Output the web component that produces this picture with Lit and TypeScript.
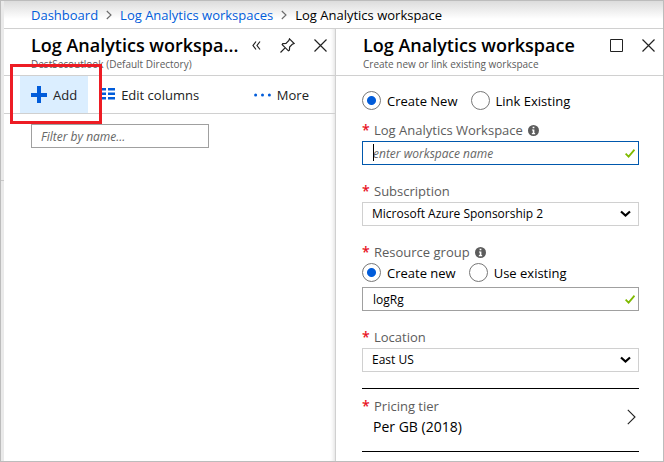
import { LitElement, html, css, svg } from "lit";
import { customElement, property, state } from "lit/decorators.js";
import { classMap } from "lit/directives/class-map.js";

const shared = css`
  *, *::before, *::after { box-sizing: border-box; }
  button, input, select {
    font: inherit;
    color: inherit;
    margin: 0;
    border-radius: 0;
  }
  button {
    display: flex;
    align-items: center;
    padding: 0;
    border: 0;
    background: none;
    text-align: left;
  }
  svg { display: block; flex: none; }
`;

const icons = {
  crumb: svg`<svg width="6" height="10" viewBox="0 0 6 10" fill="none" stroke="#6a6a6a" stroke-width="1.1"><path d="M.8 1l4.200 4-4.200 4"/></svg>`,
  collapse: svg`<svg width="9" height="9" viewBox="0 0 9 9" fill="none" stroke="#222" stroke-width="1.2"><path d="M4 .5L1 4.500l3 4M8 .5L5 4.500l3 4"/></svg>`,
  pin: svg`<svg width="15" height="15" viewBox="0 0 15 15" fill="none" stroke="#222" stroke-width="1.200"><path d="M9.500.8l4.700 4.700-1.700.6-2.900 2.900-.2 3.200-1 .6-6.200-6.200.6-1 3.200-.2 2.900-2.900zM5.300 9.700L.5 14.500"/></svg>`,
  close: svg`<svg width="13" height="13" viewBox="0 0 13 13" fill="none" stroke="#222" stroke-width="1.2"><path d="M.5.5l12 12M12.500.5l-12 12"/></svg>`,
  square: svg`<svg width="13" height="13" viewBox="0 0 13 13" fill="none" stroke="#222"><path d="M.5.5h12v12H.5z"/></svg>`,
  plus: svg`<svg width="16" height="17" viewBox="0 0 16 17" fill="#015cda"><path d="M6 0h4v7h6v4h-6v6H6v-6H0V7h6z"/></svg>`,
  columns: svg`<svg width="16" height="13" viewBox="0 0 16 13" fill="#015cda"><path d="M0 0h7v2.500H0zM0 4.500h7V7H0zM0 9h7v2.500H0zM9 0h7v2.500H9zM9 4.500h7V7H9zM9 9h7v2.500H9z"/></svg>`,
  dots: svg`<svg width="17" height="4" viewBox="0 0 17 4" fill="#015cda"><circle cx="1.600" cy="2" r="1.500"/><circle cx="8.500" cy="2" r="1.500"/><circle cx="15.400" cy="2" r="1.500"/></svg>`,
  info: svg`<svg width="11" height="11" viewBox="0 0 10 10"><circle cx="5" cy="5" r="5" fill="#5c5c5c"/><path d="M4.200 1.500h1.600v1.500H4.200zM3.600 4h2.200v3.300h.7v1h-3v-1h.8V5h-.7z" fill="#fff"/></svg>`,
  check: svg`<svg width="10" height="9" viewBox="0 0 10 9" fill="none" stroke="#7fba00" stroke-width="1.800"><path d="M.6 4.600l3 3L9.500.7"/></svg>`,
  chevron: svg`<svg width="11" height="8" viewBox="0 0 11 8" fill="none" stroke="#000" stroke-width="2.200"><path d="M1 1.500l4.500 4 4.500-4"/></svg>`,
  next: svg`<svg width="9" height="16" viewBox="0 0 9 16" fill="none" stroke="#222" stroke-width="1.100"><path d="M.8.8L8 8 .8 15.200"/></svg>`,
};

@customElement("blade-header")
class BladeHeader extends LitElement {
  @property() heading = "";
  @property() subtitle = "";
  static styles = [shared, css`
    :host {
      display: grid;
      grid-template-columns: minmax(0, 1fr) auto;
      align-content: start;
      height: 47px;
      padding: 4px 10px 0 27px;
      border-bottom: 1px solid #d0d0d0;
    }
    h2 {
      margin: 0;
      font-size: 18px;
      line-height: 24px;
      font-weight: 600;
      color: #000;
      white-space: nowrap;
    }
    p {
      grid-column: 1 / -1;
      margin: 0;
      font-size: 10px;
      line-height: 14px;
      color: #5c5c5c;
    }
  `];
  render() {
    return html`<h2>${this.heading}</h2><slot></slot><p>${this.subtitle}</p>`;
  }
}

@customElement("radio-pair")
class RadioPair extends LitElement {
  @property({ type: Array }) options: string[] = [];
  @property() name = "";
  @state() private picked = 0;
  static styles = [shared, css`
    :host { display: flex; gap: 13px; color: #000; }
    label { display: flex; align-items: center; gap: 6px; line-height: 18px; }
    input {
      appearance: none;
      width: 19px;
      height: 19px;
      border: 1px solid #777;
      border-radius: 50%;
      background: #fff;
    }
    input:checked { background: radial-gradient(circle, #015cda 4px, #fff 5px); }
  `];
  render() {
    return this.options.map((o, i) => html`<label>
      <input type="radio" name=${this.name} .checked=${i === this.picked} @change=${() => (this.picked = i)}>${o}
    </label>`);
  }
}

@customElement("app-root")
class AppRoot extends LitElement {
  static styles = [shared, css`
    :host {
      display: grid;
      grid-template-rows: auto 1fr;
      box-sizing: border-box;
      min-height: 100vh;
      padding-left: 3px;
      border: 1px solid #bcbcbc;
      background:
        linear-gradient(#c8c8c8, #c8c8c8) 0 179px / 3px 1px no-repeat,
        linear-gradient(90deg, #eaeaea 3px, #fff 3px);
      font: 13px/18px "Open Sans", "Noto Sans", sans-serif;
      color: #222;
    }
    .crumbs {
      display: flex;
      align-items: center;
      height: 28px;
      padding-left: 27px;
      border-bottom: 1px solid #d0d0d0;
      background: linear-gradient(#dcdcdc, #fff 18px);
      white-space: nowrap;
      color: #000;
    }
    .crumbs a { color: #015cda; text-decoration: none; }
    .crumbs svg { margin: 0 8px; }
    .blades { display: grid; grid-template-columns: 332fr 327fr; }
    .list { border-right: 1px solid #d0d0d0; box-shadow: inset -4px 0 4px -3px #ddd; }
    .tools { display: flex; align-items: center; height: 24px; }
    .tools { gap: 19px; margin-right: -2px; }
    .bar {
      display: flex;
      height: 38px;
      padding: 0 26px 0 16px;
      border-bottom: 1px solid #d0d0d0;
    }
    .bar button { gap: 6px; padding: 0 11px; }
    .bar .add { background: #dbeeff; }
    .bar .more { margin-left: auto; padding: 0; }
    .find { padding: 10px 27px; }
    .text {
      width: 100%;
      height: 24px;
      padding: 0 30px 0 10px;
      border: 1px solid #a0a0a0;
      background: #fff;
      font-size: 12px;
      color: #000;
      outline: none;
    }
    .text::placeholder { color: #666; font-style: italic; opacity: 1; }
    .find .text { display: block; width: 178px; padding: 0 9px; }
    .form { padding: 15px 24px 0 26px; }
    .field { margin-top: 16px; }
    .first { margin-top: 10px; }
    .label { display: flex; align-items: center; gap: 5px; height: 20px; color: #5c5c5c; }
    .field .label { margin-bottom: 1px; }
    .star { width: 7px; font-size: 14px; font-weight: 600; color: #e81123; }
    .box { position: relative; display: flex; }
    .box svg { position: absolute; right: 4px; top: 8px; pointer-events: none; }
    .box.pick svg { right: 8px; }
    .box.active .text { border-color: #0058ad; }
    .box.active::after {
      content: "";
      position: absolute;
      left: 11px;
      top: 3px;
      width: 1px;
      height: 17px;
      background: #000;
    }
    .pick select {
      appearance: none;
      width: 100%;
      height: 24px;
      padding: 0 24px 0 9px;
      border: 1px solid #d0d0d0;
      background: #fff;
      font-size: 12px;
      color: #000;
    }
    .group { margin-bottom: 5px; }
    .tier {
      width: 100%;
      height: 64px;
      margin-top: 16px;
      padding: 0 3px 6px 0;
      justify-content: space-between;
      border: solid #000;
      border-width: 1px 0;
    }
    .value { display: block; padding-left: 11px; font-size: 14px; line-height: 22px; color: #000; }
    .callout {
      position: absolute;
      left: 10px;
      top: 64px;
      width: 92px;
      height: 60px;
      border: 3px solid #ed1c24;
      pointer-events: none;
    }
  `];

  private label(text: string, id: string, info = false) {
    return html`<label class="label" for=${id}><span class="star">*</span>${text}${info ? icons.info : ""}</label>`;
  }

  private input(id: string, value: string, hint = "", active = false) {
    return html`<div class=${classMap({ box: true, active })}>
      <input class="text" id=${id} .value=${value} placeholder=${hint}>${icons.check}
    </div>`;
  }

  private pick(id: string, value: string) {
    return html`<div class="box pick"><select id=${id}><option>${value}</option></select>${icons.chevron}</div>`;
  }

  render() {
    return html`
      <nav class="crumbs">
        <a href="#">Dashboard</a>${icons.crumb}<a href="#">Log Analytics workspaces</a>${icons.crumb}<span>Log Analytics workspace</span>
      </nav>
      <main class="blades">
        <section class="list">
          <blade-header heading="Log Analytics workspa..." subtitle="DestSecoutlook (Default Directory)">
            <div class="tools">
              <button aria-label="Collapse">${icons.collapse}</button>
              <button aria-label="Pin">${icons.pin}</button>
              <button aria-label="Close">${icons.close}</button>
            </div>
          </blade-header>
          <div class="bar">
            <button class="add">${icons.plus}Add</button>
            <button>${icons.columns}Edit columns</button>
            <button class="more">${icons.dots}More</button>
          </div>
          <div class="find"><input class="text" aria-label="Filter by name" placeholder="Filter by name..."></div>
        </section>
        <section class="create">
          <blade-header heading="Log Analytics workspace" subtitle="Create new or link existing workspace">
            <div class="tools">
              <button aria-label="Maximize">${icons.square}</button>
              <button aria-label="Close">${icons.close}</button>
            </div>
          </blade-header>
          <form class="form">
            <radio-pair name="mode" .options=${["Create New", "Link Existing"]}></radio-pair>
            <div class="field first">${this.label("Log Analytics Workspace", "ws", true)}${this.input("ws", "", "enter workspace name", true)}</div>
            <div class="field">${this.label("Subscription", "sub")}${this.pick("sub", "Microsoft Azure Sponsorship 2")}</div>
            <div class="field">
              ${this.label("Resource group", "rg", true)}
              <radio-pair class="group" name="group" .options=${["Create new", "Use existing"]}></radio-pair>
              ${this.input("rg", "logRg")}
            </div>
            <div class="field">${this.label("Location", "loc")}${this.pick("loc", "East US")}</div>
            <button class="tier" type="button">
              <span><span class="label"><span class="star">*</span>Pricing tier</span><span class="value">Per GB (2018)</span></span>
              ${icons.next}
            </button>
          </form>
        </section>
      </main>
      <div class="callout"></div>
    `;
  }
}
